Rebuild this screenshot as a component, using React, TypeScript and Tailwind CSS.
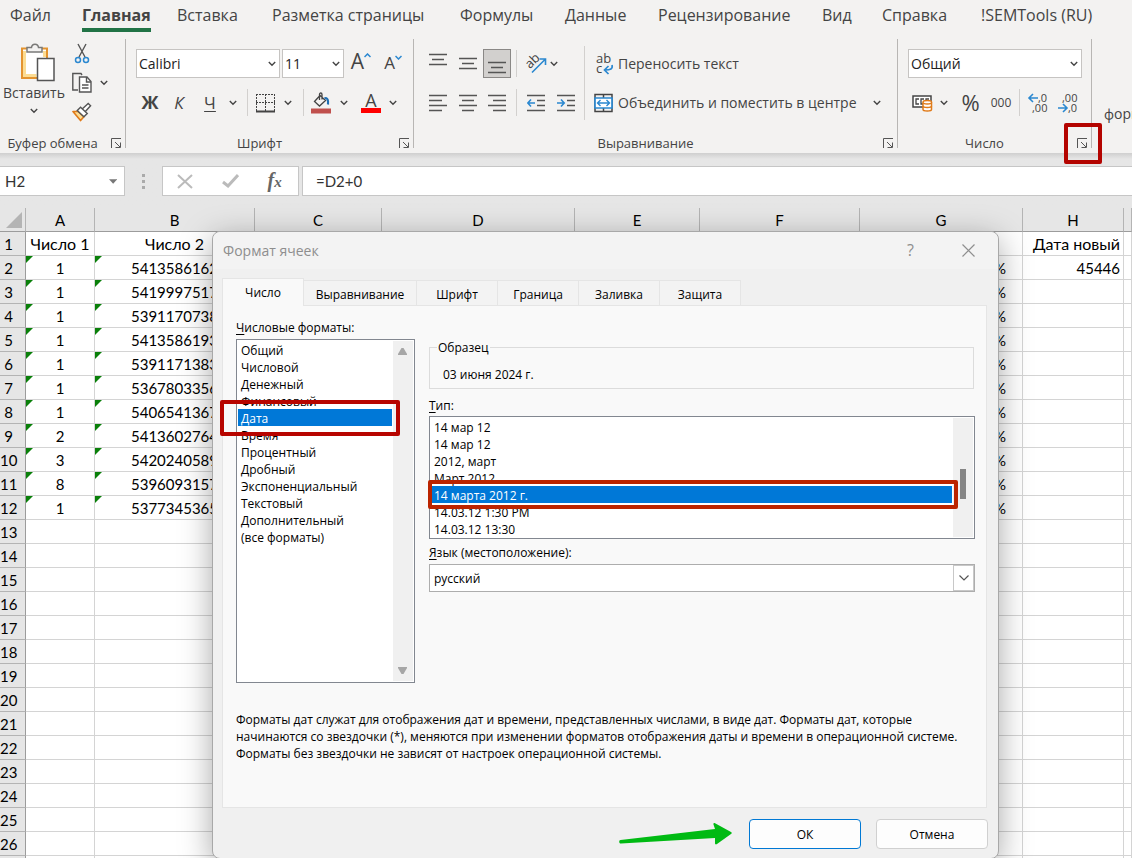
import type { ReactNode } from "react";

const ribbonTabs = [
  "Файл", "Главная", "Вставка", "Разметка страницы", "Формулы", "Данные",
  "Рецензирование", "Вид", "Справка", "!SEMTools (RU)",
];

const rows = [
  ["1", "5413586162"], ["1", "5419997517"], ["1", "5391170738"], ["1", "5413586193"],
  ["1", "5391171383"], ["1", "5367803356"], ["1", "5406541367"], ["2", "5413602764"],
  ["3", "5420240589"], ["8", "5396093157"], ["1", "5377345365"],
];

const categories = [
  "Общий", "Числовой", "Денежный", "Финансовый", "Дата", "Время", "Процентный",
  "Дробный", "Экспоненциальный", "Текстовый", "Дополнительный", "(все форматы)",
];

const dateTypes = [
  "14 мар 12", "14 мар 12", "2012, март", "Март 2012", "14 марта 2012 г.",
  "14.03.12 1:30 PM", "14.03.12 13:30",
];

function Chevron() {
  return (
    <svg width="8" height="6" viewBox="0 0 8 6" fill="none" stroke="#444" strokeWidth="1.4" aria-hidden="true">
      <path d="M.8 1 4 4.2 7.2 1" />
    </svg>
  );
}

function More({ label }: { label: string }) {
  return (
    <button aria-label={label} className="flex h-7 w-3 shrink-0 items-center justify-center">
      <Chevron />
    </button>
  );
}

function Tool({ label, className = "", children }: { label: string; className?: string; children: ReactNode }) {
  return (
    <button aria-label={label} className={`flex h-[29px] shrink-0 items-center justify-center ${className}`}>
      {children}
    </button>
  );
}

function Separator() {
  return <span className="h-[27px] w-px shrink-0 bg-[#d2d0ce]" />;
}

function Group({ title, className, marked, children }: { title: string; className: string; marked?: boolean; children: ReactNode }) {
  return (
    <section aria-label={title} className={`flex shrink-0 ${className}`}>
      <div className="flex min-w-0 flex-1 flex-col">
        <div className="h-[95px]">{children}</div>
        <div className="flex h-[19px] items-center">
          <span className="flex-1 text-center text-[13px] whitespace-nowrap">{title}</span>
          <button aria-label={`${title}: параметры`} className="relative flex h-5 w-5 shrink-0 items-center justify-center pl-[2px]">
            <svg width="11" height="11" viewBox="0 0 11 11" fill="none" stroke="#555" aria-hidden="true">
              <path d="M.5 10V.5H10M4 4l5 5M9.500 4.500v5h-5" />
            </svg>
            {marked && <span className="absolute -top-[11px] -right-[11px] -bottom-[10px] -left-[7px] z-10 rounded-xs border-4 border-[#b40400]" />}
          </button>
        </div>
      </div>
      <span className="h-[109px] w-px bg-[#b8b6b4]" />
    </section>
  );
}

function Combo({ label, value, className }: { label: string; value: string; className: string }) {
  return (
    <span className={`relative flex h-[29px] shrink-0 items-center border border-[#c6c4c2] bg-white ${className}`}>
      <select aria-label={label} className="h-full w-full appearance-none bg-transparent pl-[2px] text-[14px] text-[#222] outline-none">
        <option>{value}</option>
      </select>
      <span className="pointer-events-none absolute right-[3px]"><Chevron /></span>
    </span>
  );
}

function Lines({ d }: { d: string }) {
  return (
    <svg width="18" height="18" viewBox="0 0 18 18" fill="none" stroke="#555" strokeWidth="1.5" aria-hidden="true">
      <path d={d} />
    </svg>
  );
}

function Clipboard() {
  return (
    <div className="flex">
      <button className="flex w-[68px] flex-col items-center pt-1 text-[14px] leading-5">
        <svg width="36" height="40" viewBox="0 0 36 40" fill="none" aria-hidden="true" className="ml-2">
          <path d="M2 5.500h25V35H2z" fill="#fff" stroke="#e3932f" strokeWidth="2" />
          <path d="M4.500 8v24.500h12" stroke="#fbdc93" strokeWidth="3" />
          <path d="M24.500 8v6" stroke="#fbdc93" strokeWidth="3" />
          <path d="M7 9V4.500h4.500C12 0 18 0 18.500 4.500H22V9z" fill="#f3f2f1" stroke="#7a7a78" strokeWidth="1.500" />
          <path d="M17.500 15.500H34V37.500H17.500z" fill="#fff" stroke="#555" strokeWidth="1.500" />
        </svg>
        <span>Вставить</span>
        <span className="flex h-4 items-center"><Chevron /></span>
      </button>
      <div className="flex flex-col pl-1">
        <Tool label="Вырезать" className="w-5">
          <svg width="20" height="21" viewBox="0 0 20 21" fill="none" aria-hidden="true">
            <path d="M6 1l7 13M14 1 7 14" stroke="#555" strokeWidth="1.400" />
            <circle cx="6" cy="17" r="2.500" stroke="#2b88d0" strokeWidth="1.500" />
            <circle cx="14" cy="17" r="2.500" stroke="#2b88d0" strokeWidth="1.500" />
          </svg>
        </Tool>
        <div className="flex items-center">
          <Tool label="Копировать" className="w-5">
            <svg width="20" height="21" viewBox="0 0 20 21" fill="none" stroke="#555" strokeWidth="1.400" aria-hidden="true">
              <path d="M6 18H.8V1.500H9l1 1.500" />
              <path d="M7.500 5H15l4 4.500V20H7.500z" fill="#fff" />
              <path d="M14.500 5v5H19M10 13h6.500M10 16h6.500" />
            </svg>
          </Tool>
          <span className="ml-[6px] flex"><More label="Параметры копирования" /></span>
        </div>
        <Tool label="Формат по образцу" className="w-5">
          <svg width="21" height="20" viewBox="0 0 21 20" fill="none" aria-hidden="true">
            <path d="M1 9.500h5.500l6 5.500L9 19z" fill="#fbdc93" stroke="#e07b1a" strokeWidth="1.700" strokeLinejoin="round" />
            <path d="M5.500 8.500 9 5l7 6.500-3.500 3.500zM11 6.500l6-5.500 2.500 2.500-5.500 6" fill="#fff" stroke="#555" strokeWidth="1.500" />
          </svg>
        </Tool>
      </div>
    </div>
  );
}

function FontTools() {
  return (
    <div className="flex flex-col gap-[10px] pt-[10px]">
      <div className="flex pl-[10px]">
        <Combo label="Шрифт" value="Calibri" className="w-36" />
        <Combo label="Размер шрифта" value="11" className="ml-[2px] w-[62px]" />
        <Tool label="Увеличить размер" className="ml-[7px] w-5 pb-1 text-[21px]">
          A
          <svg width="7" height="5" viewBox="0 0 7 5" fill="none" stroke="#2b88d0" strokeWidth="1.500" aria-hidden="true" className="mb-3 shrink-0"><path d="M.5 4l3-3 3 3" /></svg>
        </Tool>
        <Tool label="Уменьшить размер" className="ml-3 w-5 pb-px text-[17px]">
          A
          <svg width="7" height="5" viewBox="0 0 7 5" fill="none" stroke="#2b88d0" strokeWidth="1.500" aria-hidden="true" className="mb-3 shrink-0"><path d="M.5 1l3 3 3-3" /></svg>
        </Tool>
      </div>
      <div className="flex items-center pl-[9px]">
        <Tool label="Полужирный" className="w-[30px] text-[18px] font-bold">Ж</Tool>
        <Tool label="Курсив" className="w-7 text-[17px] italic">К</Tool>
        <Tool label="Подчеркнутый" className="w-[34px] text-[17px] underline underline-offset-2">Ч</Tool>
        <More label="Вид подчеркивания" />
        <span className="ml-2 flex"><Separator /></span>
        <Tool label="Границы" className="w-[34px]">
          <svg width="19" height="20" viewBox="0 0 19 20" fill="none" aria-hidden="true">
            <path d="M0 1.500h19M.5 1v17M9.500 1v17M18.500 1v17M0 9.500h19" stroke="#444" strokeDasharray="2 1" />
            <path d="M0 18.500h19" stroke="#444" strokeWidth="2" />
          </svg>
        </Tool>
        <More label="Виды границ" />
        <span className="ml-[9px] flex"><Separator /></span>
        <Tool label="Цвет заливки" className="w-[34px]">
          <svg width="20" height="22" viewBox="0 0 20 22" fill="none" aria-hidden="true">
            <path d="M9 3.500 3.500 9.500l5 4.500L14.500 8.500 8.500 3M8.500 8V2.500c0-2 2.500-2 2.500 0v5" stroke="#444" strokeWidth="1.300" />
            <path d="M13.500 6.500c3-1.500 4 2 3.500 6" stroke="#1e6fb5" strokeWidth="2.200" />
            <path d="M0 16.500h20v5H0z" fill="#c0504d" />
          </svg>
        </Tool>
        <More label="Цвета заливки" />
        <Tool label="Цвет текста" className="w-[37px] flex-col pl-[5px]">
          <span className="text-[18px] leading-4">A</span>
          <span className="h-[5px] w-5 bg-[#f00]" />
        </Tool>
        <More label="Цвета текста" />
      </div>
    </div>
  );
}

function AlignTools() {
  return (
    <div className="flex pt-[7px]">
      <div className="flex w-[170px] flex-col gap-[10px] pt-[3px] pl-[9px]">
        <div className="flex items-center">
          <Tool label="По верхнему краю" className="w-[30px] pb-3"><Lines d="M0 5.500h18M3 10.500h12M0 15.500h18" /></Tool>
          <Tool label="Посередине" className="w-[30px] pb-1"><Lines d="M0 5.500h18M3 10.500h12M0 15.500h18" /></Tool>
          <Tool label="По нижнему краю" className="w-7 border border-[#8a8886] bg-[#d2d0ce] pt-1"><Lines d="M0 5.500h18M3 10.500h12M0 15.500h18" /></Tool>
          <span className="ml-[5px] flex"><Separator /></span>
          <Tool label="Ориентация" className="ml-2 w-[21px]">
            <svg width="22" height="22" viewBox="0 0 22 22" fill="none" aria-hidden="true" className="overflow-visible">
              <text x="2" y="15" transform="rotate(-45 5 12)" fontSize="13" fill="#444" fontFamily="Open Sans, sans-serif">ab</text>
              <path d="M7 19.500 20 6.500M14.500 6H20.500V12" stroke="#2b88d0" strokeWidth="1.600" />
            </svg>
          </Tool>
          <span className="ml-[2px] flex"><More label="Виды ориентации" /></span>
        </div>
        <div className="flex items-center">
          <Tool label="По левому краю" className="w-[30px]"><Lines d="M0 1.500h18M0 6.500h13M0 11.500h18M0 16.500h13" /></Tool>
          <Tool label="По центру" className="w-[30px]"><Lines d="M0 1.500h18M3 6.500h12M0 11.500h18M3 16.500h12" /></Tool>
          <Tool label="По правому краю" className="w-7"><Lines d="M0 1.500h18M5 6.500h13M0 11.500h18M5 16.500h13" /></Tool>
          <span className="ml-[5px] flex"><Separator /></span>
          <Tool label="Уменьшить отступ" className="ml-1 w-[30px]">
            <svg width="18" height="18" viewBox="0 0 18 18" fill="none" aria-hidden="true">
              <path d="M0 1.500h18M10 6.500h8M10 11.500h8M0 16.500h18" stroke="#555" strokeWidth="1.500" />
              <path d="M8 9H1M4 5.500.8 9 4 12.500" stroke="#2b88d0" strokeWidth="1.600" />
            </svg>
          </Tool>
          <Tool label="Увеличить отступ" className="w-[30px]">
            <svg width="18" height="18" viewBox="0 0 18 18" fill="none" aria-hidden="true">
              <path d="M0 1.500h18M10 6.500h8M10 11.500h8M0 16.500h18" stroke="#555" strokeWidth="1.500" />
              <path d="M0 9h7M4 5.500 7.200 9 4 12.500" stroke="#2b88d0" strokeWidth="1.600" />
            </svg>
          </Tool>
        </div>
      </div>
      <span className="h-[74px] w-px bg-[#d2d0ce]" />
      <div className="flex flex-1 flex-col gap-[10px] pt-[3px] pl-[9px] text-[14px]">
        <button className="flex h-[29px] items-center gap-[5px] whitespace-nowrap">
          <svg width="19" height="22" viewBox="0 0 19 22" fill="none" aria-hidden="true" className="overflow-visible">
            <text x="2" y="10" fontSize="13" fill="#444" fontFamily="Open Sans, sans-serif">ab</text>
            <text x="2" y="20" fontSize="13" fill="#444" fontFamily="Open Sans, sans-serif">c</text>
            <path d="M18 12c1 4-1.500 5-7 5M14.500 13l-4 4 4 4" stroke="#2b88d0" strokeWidth="1.700" />
          </svg>
          Переносить текст
        </button>
        <div className="flex items-center">
          <button className="flex h-[29px] flex-1 items-center gap-[5px] whitespace-nowrap">
            <svg width="19" height="20" viewBox="0 0 19 20" fill="none" aria-hidden="true">
              <path d="M1 1.500h17v17H1zM9.500 1v4M9.500 15v4" stroke="#444" strokeWidth="1.500" />
              <path d="M1 5h17v10H1z" fill="#fff" stroke="#2b88d0" strokeWidth="1.700" />
              <path d="M3.500 10h12M6.500 7l-3 3 3 3M12.500 7l3 3-3 3" stroke="#2b88d0" strokeWidth="1.400" />
            </svg>
            Объединить и поместить в центре
          </button>
          <span className="mr-[14px] flex"><More label="Варианты объединения" /></span>
        </div>
      </div>
    </div>
  );
}

function NumberTools() {
  return (
    <div className="flex flex-col gap-[10px] pt-[10px] pl-[10px]">
      <Combo label="Числовой формат" value="Общий" className="w-[174px]" />
      <div className="flex items-center">
        <Tool label="Финансовый формат" className="w-7">
          <svg width="21" height="18" viewBox="0 0 21 18" fill="none" aria-hidden="true">
            <path d="M1 2h18v11H1z" fill="#fff" stroke="#444" strokeWidth="1.500" />
            <path d="M7 5H4v5h3M12 5H9v5h3M14 7V5h3" stroke="#444" strokeWidth="1.300" />
            <path d="M11 8.500v7c0 2 8.500 2 8.500 0v-7" fill="#fff" stroke="#e07b1a" strokeWidth="1.500" />
            <ellipse cx="15.300" cy="8.300" rx="4.300" ry="1.700" fill="#fff" stroke="#e07b1a" strokeWidth="1.500" />
            <path d="M11 12c0 2 8.500 2 8.500 0" stroke="#e07b1a" strokeWidth="1.400" />
          </svg>
        </Tool>
        <span className="ml-[2px] flex"><More label="Валюты" /></span>
        <Tool label="Процентный формат" className="w-[41px] text-[22px]">%</Tool>
        <Tool label="Формат с разделителями" className="w-5 text-[12px]">000</Tool>
        <span className="ml-2 flex"><Separator /></span>
        <Tool label="Увеличить разрядность" className="ml-[3px] w-[30px]">
          <svg width="20" height="22" viewBox="0 0 20 22" fill="none" aria-hidden="true" className="overflow-visible">
            <path d="M10 6H1M5 2 1 6l4 4" stroke="#2b88d0" strokeWidth="1.600" />
            <text x="10" y="10" fontSize="11" fill="#444" fontFamily="Open Sans, sans-serif">,0</text>
            <text x="4" y="20" fontSize="11" fill="#444" fontFamily="Open Sans, sans-serif">,00</text>
          </svg>
        </Tool>
        <Tool label="Уменьшить разрядность" className="w-[30px]">
          <svg width="20" height="22" viewBox="0 0 20 22" fill="none" aria-hidden="true" className="overflow-visible">
            <path d="M0 16h9M5 12l4 4-4 4" stroke="#2b88d0" strokeWidth="1.600" />
            <text x="4" y="10" fontSize="11" fill="#444" fontFamily="Open Sans, sans-serif">,00</text>
            <text x="10" y="20" fontSize="11" fill="#444" fontFamily="Open Sans, sans-serif">,0</text>
          </svg>
        </Tool>
      </div>
    </div>
  );
}

function Ribbon() {
  return (
    <header className="shrink-0 bg-[#f3f2f1] text-[#444]">
      <nav className="grid h-[39px] grid-cols-[72px_95px_95px_188px_105px_93px_164px_60px_99px_auto] justify-start pl-[10px] text-[16px]">
        {ribbonTabs.map((tab) => (
          <div key={tab}>
            <button className={tab === "Главная" ? "h-8 border-b-4 border-[#217346] pt-px font-bold whitespace-nowrap" : "h-8 border-b-4 border-transparent pt-px whitespace-nowrap"}>
              {tab}
            </button>
          </div>
        ))}
      </nav>
      <div className="flex h-[114px]">
        <Group title="Буфер обмена" className="w-[126px]"><Clipboard /></Group>
        <Group title="Шрифт" className="w-[288px]"><FontTools /></Group>
        <Group title="Выравнивание" className="w-[484px]"><AlignTools /></Group>
        <Group title="Число" className="w-[194px]" marked><NumberTools /></Group>
        <div className="min-w-0 flex-1 overflow-hidden pt-[65px] pl-3 text-[14px] leading-5 whitespace-nowrap">форматирование</div>
      </div>
    </header>
  );
}

function FormulaBar() {
  return (
    <div className="shrink-0 bg-linear-to-b from-[#cfcfcf] to-[#e6e6e6] to-[6px] pt-[13px] pb-3 font-['Lato','Open_Sans',sans-serif] text-[15px] text-[#333]">
      <div className="flex h-[30px]">
        <div className="flex w-[125px] items-center border border-l-0 border-[#c6c6c6] bg-white pr-[7px] pl-[5px]">
          <input aria-label="Имя ячейки" defaultValue="H2" className="h-full w-full min-w-0 outline-none" />
          <svg width="9" height="5" viewBox="0 0 9 5" fill="#777" aria-hidden="true"><path d="M0 0h9L4.500 5z" /></svg>
        </div>
        <div className="flex w-[37px] flex-col items-center justify-center gap-[3px]">
          <span className="h-[3px] w-[3px] bg-[#aaa]" />
          <span className="h-[3px] w-[3px] bg-[#aaa]" />
          <span className="h-[3px] w-[3px] bg-[#aaa]" />
        </div>
        <div className="mr-[3px] flex w-[137px] items-center justify-around border border-[#c6c6c6] bg-white pr-[2px]">
          <button aria-label="Отмена ввода">
            <svg width="16" height="15" viewBox="0 0 16 15" stroke="#bbb" strokeWidth="2" aria-hidden="true"><path d="M1 1l14 13M15 1 1 14" /></svg>
          </button>
          <button aria-label="Ввод">
            <svg width="17" height="14" viewBox="0 0 17 14" fill="none" stroke="#bbb" strokeWidth="3" aria-hidden="true"><path d="M1 8l5 4L16 1" /></svg>
          </button>
          <button aria-label="Вставить функцию" className="font-['Liberation_Serif',serif] text-[20px] leading-5 font-bold text-[#666] italic">
            f<span className="text-[15px]">x</span>
          </button>
        </div>
        <input aria-label="Формула" defaultValue="=D2+0" className="min-w-0 flex-1 border border-r-0 border-[#c6c6c6] bg-white pl-[13px] outline-none" />
      </div>
    </div>
  );
}

function Flag() {
  return <span className="absolute top-0 left-0 border-t-[7px] border-r-[7px] border-t-[#0a800a] border-r-transparent" />;
}

function Sheet() {
  const cell = "relative h-6 border-r border-b border-[#d4d4d4] p-0";
  return (
    <table className="w-full table-fixed border-separate border-spacing-0 font-['Lato','Open_Sans',sans-serif] text-[15px] leading-5 whitespace-nowrap text-black">
      <colgroup>
        <col className="w-[26px]" /><col className="w-[69px]" /><col className="w-40" /><col className="w-[127px]" />
        <col className="w-[193px]" /><col className="w-[125px]" /><col className="w-40" /><col className="w-[163px]" />
        <col className="w-[101px]" /><col />
      </colgroup>
      <thead>
        <tr>
          <th className="h-6 border-r border-b border-[#9c9c9c] border-r-[#b4b4b4] bg-[#e6e6e6] p-0">
            <svg width="16" height="16" viewBox="0 0 16 16" fill="#b4b4b4" aria-hidden="true" className="ml-[6px]"><path d="M16 0v16H0z" /></svg>
          </th>
          {["A", "B", "C", "D", "E", "F", "G", "H", ""].map((name, i) => (
            <th key={i} className="h-6 border-r border-b border-[#9c9c9c] border-r-[#b4b4b4] bg-[#e6e6e6] p-0 font-normal">{name}</th>
          ))}
        </tr>
      </thead>
      <tbody>
        {Array.from({ length: 27 }, (_, i) => {
          const data = i > 0 ? rows[i - 1] : undefined;
          return (
            <tr key={i} className={i === 0 ? "text-[16px]" : undefined}>
              <th className="h-6 border-r border-b border-[#b4b4b4] border-r-[#9c9c9c] bg-[#e6e6e6] p-0 pr-2 text-[15px] font-normal">{i < 26 && i + 1}</th>
              <td className={`${cell} text-center`}>{i === 0 ? "Число 1" : data && <>{data[0]}<Flag /></>}</td>
              <td className={`${cell} text-center`}>{i === 0 ? "Число 2" : data && <>{data[1]}<Flag /></>}</td>
              <td className={cell} />
              <td className={cell} />
              <td className={cell} />
              <td className={cell} />
              <td className={`${cell} pr-4 text-right`}>{data && "%"}</td>
              <td className={`${cell} pr-[3px] text-right`}>{i === 0 ? "Дата новый" : i === 1 && "45446"}</td>
              <td className={cell} />
            </tr>
          );
        })}
      </tbody>
    </table>
  );
}

function FormatDialog() {
  return (
    <div
      role="dialog"
      aria-label="Формат ячеек"
      className="absolute top-[231px] left-[212px] w-[787px] rounded-lg border border-[#a8a8a8] bg-[#f0f0f0] text-[12px] leading-[17px] text-black shadow-[0_8px_32px_rgba(0,0,0,0.35)]"
    >
      <div className="flex h-[37px] items-center rounded-t-lg bg-[#f3f3f3] pl-[10px] text-[14px] text-[#8e8e8e]">
        <h2 className="flex-1">Формат ячеек</h2>
        <button aria-label="Справка" className="w-[57px] text-[16px]">?</button>
        <button aria-label="Закрыть" className="flex w-[59px] justify-center">
          <svg width="13" height="13" viewBox="0 0 13 13" stroke="#8e8e8e" strokeWidth="1.200" aria-hidden="true"><path d="M.5.5l12 12M12.500.5l-12 12" /></svg>
        </button>
      </div>
      <div className="pr-[10px] pl-[9px]">
        <div role="tablist" className="flex items-end pt-[9px]">
          <button role="tab" aria-selected="true" className="relative -mb-px h-7 w-[82px] border border-b-0 border-[#e5e5e5] bg-[#f9f9f9]">Число</button>
          <button role="tab" className="h-[25px] w-[113px] border-t border-r border-[#e5e5e5] bg-[#f3f3f3] pt-[2px]">Выравнивание</button>
          {["Шрифт", "Граница", "Заливка", "Защита"].map((tab) => (
            <button role="tab" key={tab} className="h-[25px] w-[81px] border-t border-r border-[#e5e5e5] bg-[#f3f3f3] pt-[2px]">{tab}</button>
          ))}
        </div>
        <div className="mr-px border border-[#e5e5e5] bg-[#f9f9f9] pt-[13px] pr-[11px] pb-[45px] pl-[13px]">
          <div className="flex gap-[14px]">
            <div className="w-[179px]">
              <div id="categories-label"><u className="underline-offset-2">Ч</u>исловые форматы:</div>
              <div className="mt-[3px] flex h-[344px] border border-[#828790] bg-white p-px">
                <ul role="listbox" aria-labelledby="categories-label" className="flex-1">
                  {categories.map((name) => (
                    <li
                      key={name}
                      role="option"
                      aria-selected={name === "Дата"}
                      className={name === "Дата" ? "relative h-[17px] bg-[#0078d7] pt-px pl-[3px] text-white" : "h-[17px] pt-px pl-[3px]"}
                    >
                      {name}
                      {name === "Дата" && <span className="absolute -top-[9px] -right-2 -bottom-[10px] -left-[18px] rounded-xs border-4 border-[#b70500]" />}
                    </li>
                  ))}
                </ul>
                <div className="ml-px flex w-5 flex-col items-center justify-between bg-[#f0f0f0] py-[7px] pr-px">
                  <svg width="9" height="7" viewBox="0 0 9 7" fill="#a6a6a6" aria-hidden="true"><path d="M3.500 0h2L9 6v1H0V6z" /></svg>
                  <svg width="9" height="7" viewBox="0 0 9 7" fill="#a6a6a6" aria-hidden="true"><path d="M3.500 7h2L9 1V0H0v1z" /></svg>
                </div>
              </div>
            </div>
            <div className="flex-1 pt-5">
              <fieldset className="mr-px h-[50px] border border-[#dcdcdc] px-[13px]">
                <legend className="-ml-[6px] px-px">Образец</legend>
                <div className="pt-[10px]">03 июня 2024 г.</div>
              </fieldset>
              <div id="types-label" className="mt-2"><u className="underline-offset-2">Т</u>ип:</div>
              <div className="mt-[2px] flex h-[123px] border border-[#828790] bg-white p-px">
                <ul role="listbox" aria-labelledby="types-label" className="flex-1">
                  {dateTypes.map((name, i) => (
                    <li
                      key={i}
                      role="option"
                      aria-selected={i === 4}
                      className={i === 4 ? "relative z-10 h-[17px] bg-[#0078d7] pt-px pl-[3px] text-white" : "h-[17px] pt-px pl-[3px]"}
                    >
                      {name}
                      {i === 4 && <span className="absolute -top-[6px] -right-[6px] -bottom-[6px] -left-[3px] rounded-xs border-4 border-[#bb2400]" />}
                    </li>
                  ))}
                </ul>
                <div className="ml-px flex w-5 justify-center bg-[#f0f0f0] pt-[51px]">
                  <span className="h-[30px] w-[6px] bg-[#858585]" />
                </div>
              </div>
              <label htmlFor="locale" className="mt-[5px] block"><u className="underline-offset-2">Я</u>зык (местоположение):</label>
              <div className="relative mt-[3px] flex h-7 items-center border border-[#adadad] bg-white">
                <select id="locale" className="h-full w-full appearance-none bg-transparent pl-1 outline-none">
                  <option>русский</option>
                </select>
                <span className="pointer-events-none absolute inset-y-0 right-0 flex w-[21px] items-center justify-center border border-[#c8c8c8] bg-white">
                  <svg width="10" height="6" viewBox="0 0 10 6" fill="none" stroke="#555" strokeWidth="1.200" aria-hidden="true"><path d="M.5.5 5 5 9.500.5" /></svg>
                </span>
              </div>
            </div>
          </div>
          <p className="mt-7 whitespace-nowrap">
            Форматы дат служат для отображения дат и времени, представленных числами, в виде дат. Форматы дат, которые<br />
            начинаются со звездочки (*), меняются при изменении форматов отображения даты и времени в операционной системе.<br />
            Форматы без звездочки не зависят от настроек операционной системы.
          </p>
        </div>
        <div className="flex items-center justify-end pt-[11px] pb-[9px]">
          <svg width="113" height="22" viewBox="0 0 113 22" fill="#00ba13" aria-hidden="true" className="mr-[17px]">
            <path d="M1.500 17 96 6l-1.500-4.500c-.5-1.500 1-2 2-1L112 9c1 .5 1 1.500 0 2L98 21c-1 .8-2 .5-2-1v-5L2 20.500c-2 .3-2.500-3.200-.5-3.500z" />
          </svg>
          <button className="h-[30px] w-28 rounded border border-[#0078d4] bg-[#fdfdfd]">ОК</button>
          <button className="ml-[15px] h-[30px] w-28 rounded border border-[#d0d0d0] bg-[#fdfdfd]">Отмена</button>
        </div>
      </div>
    </div>
  );
}

export default function App() {
  return (
    <main className="relative flex h-screen flex-col overflow-hidden bg-white font-['Open_Sans','Noto_Sans',sans-serif]">
      <Ribbon />
      <FormulaBar />
      <div className="min-h-0 flex-1 overflow-hidden"><Sheet /></div>
      <FormatDialog />
    </main>
  );
}
